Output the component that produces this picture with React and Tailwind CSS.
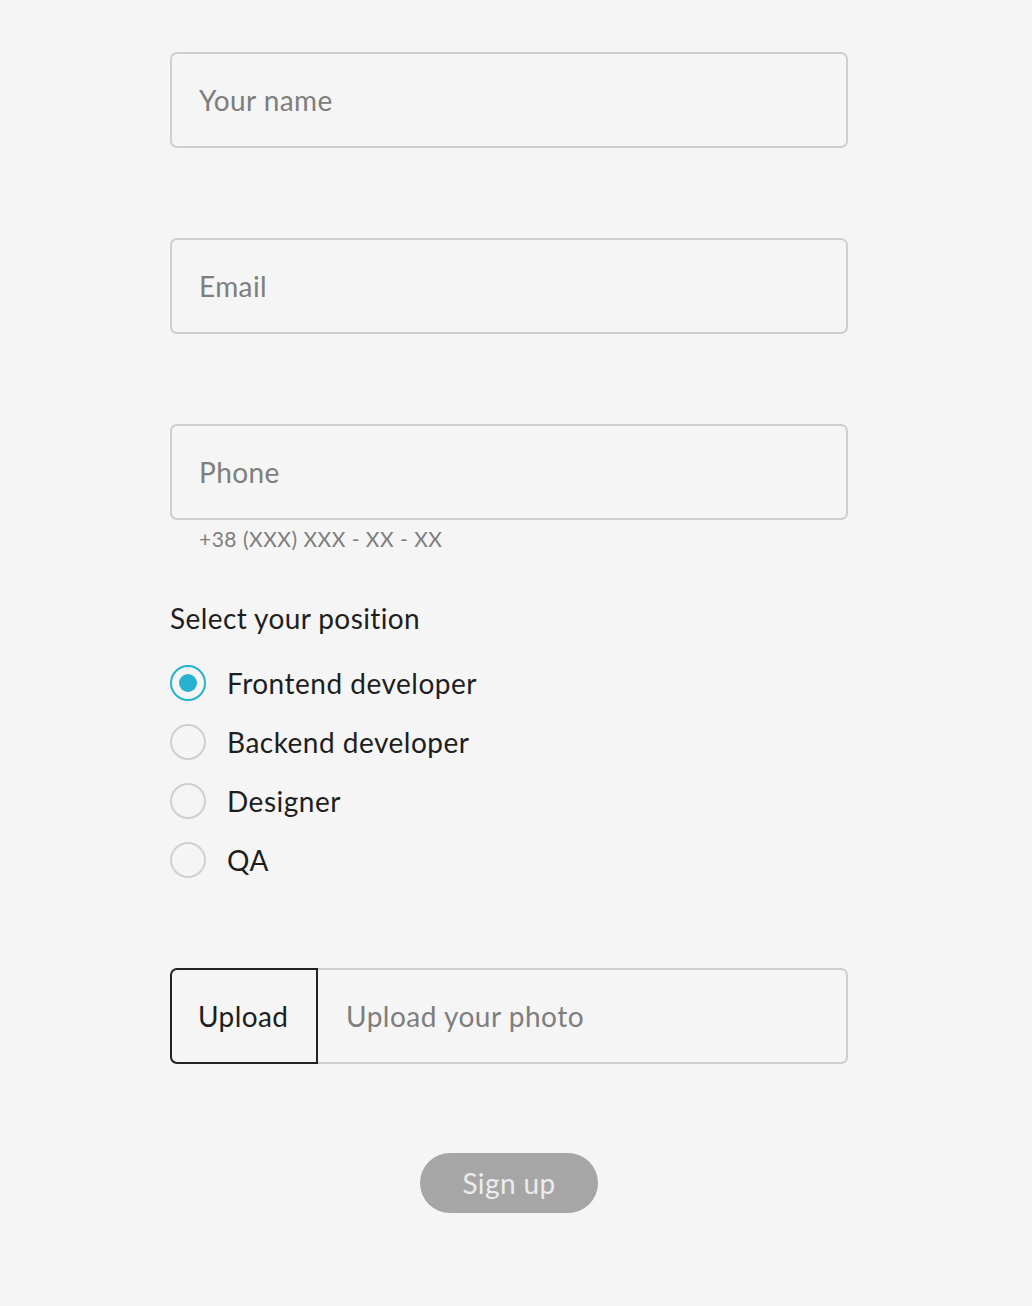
import React, { useState } from 'react';

const font = { fontFamily: 'Lato, "Noto Sans", sans-serif' };

const TextField = ({ placeholder, helper }) => (
    <div>
        <div className="h-[96px] rounded-[7px] border-2 border-[#d0cfcf] flex items-center px-[27px]">
            <span className="text-[28px] tracking-[0.4px] text-[#7e7e7e]">{placeholder}</span>
        </div>
        {helper && (
            <div className="pl-[29px] pt-[5px] text-[21px] leading-[28px] tracking-[0.5px] text-[#7e7e7e]">{helper}</div>
        )}
    </div>
);

const positions = ['Frontend developer', 'Backend developer', 'Designer', 'QA'];

const App = () => {
    const [selected, setSelected] = useState(0);

    return (
        <div className="min-h-[1306px] bg-[#f5f5f5] pt-[52px] pl-[170px]" style={font}>
            <div className="w-[678px] flex flex-col">
                <TextField placeholder="Your name" />
                <div className="h-[90px]" />
                <TextField placeholder="Email" />
                <div className="h-[90px]" />
                <TextField placeholder="Phone" helper="+38 (XXX) XXX - XX - XX" />

                <div className="mt-[45px] text-[28px] leading-[40px] tracking-[0.4px] text-[#1e1e1e]">Select your position</div>

                <div className="mt-[27px] flex flex-col gap-[23px]">
                    {positions.map((p, i) => (
                        <button
                            key={p}
                            onClick={() => setSelected(i)}
                            className="flex items-center gap-[21px] text-left"
                        >
                            <span
                                className={
                                    i === selected
                                        ? 'w-[36px] h-[36px] rounded-full border-2 border-[#26b2d0] flex items-center justify-center'
                                        : 'w-[36px] h-[36px] rounded-full border-2 border-[#d0cfcf]'
                                }
                            >
                                {i === selected && <span className="w-[18px] h-[18px] rounded-full bg-[#26b2d0]" />}
                            </span>
                            <span className="text-[28px] leading-[36px] tracking-[0.5px] text-[#1e1e1e]">{p}</span>
                        </button>
                    ))}
                </div>

                <div className="mt-[90px] h-[96px] flex">
                    <div className="w-[148px] h-full border-2 border-[#222] rounded-l-[7px] flex items-center pl-[26px]">
                        <span className="text-[28px] tracking-[0.4px] text-[#1e1e1e]">Upload</span>
                    </div>
                    <div className="flex-1 h-full border-2 border-l-0 border-[#d0cfcf] rounded-r-[7px] flex items-center pl-[28px]">
                        <span className="text-[28px] tracking-[0.5px] text-[#7e7e7e]">Upload your photo</span>
                    </div>
                </div>

                <div className="mt-[89px] flex justify-center">
                    <button className="w-[178px] h-[60px] rounded-full bg-[#a6a6a6] text-[28px] tracking-[0.4px] text-[#ececec]">
                        Sign up
                    </button>
                </div>
            </div>
        </div>
    );
};

export default App;
